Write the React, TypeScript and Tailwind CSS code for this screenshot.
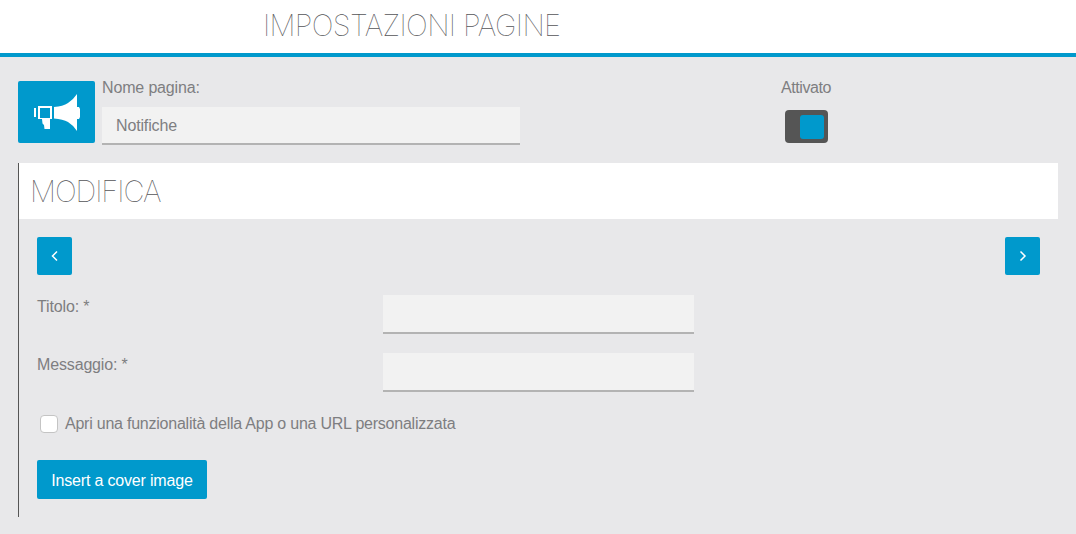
import React from 'react'

const Megaphone = () => (
  <svg width="46" height="37" viewBox="0 0 46 37" fill="white">
    <rect x="0" y="14" width="2" height="9" />
    <path fillRule="evenodd" d="M4 12h14v13h-2v10h-5.500l-.5-4-1.500-1.500-.5-4.500h-4zM6 14v10h10v-10z" />
    <path d="M20 13q9-.5 14-4q5-3 9-9v13h2l1 2v8l-1 2h-2v12q-4-6-9-9q-5-3-14-3.500z" />
  </svg>
)

const Chevron = ({ right }: { right?: boolean }) => (
  <svg width="8" height="12" viewBox="0 0 8 12" fill="none" stroke="white" strokeWidth="1.500">
    <path d={right ? 'M1.500 1.500L6 6L1.500 10.500' : 'M6 1.500L1.500 6L6 10.500'} />
  </svg>
)

const NavButton = ({ right }: { right?: boolean }) => (
  <button className="w-[35px] h-[38px] rounded-[2px] bg-[#0099cc] flex items-center justify-center">
    <Chevron right={right} />
  </button>
)

const Field = ({ label, mb }: { label: string; mb: string }) => (
  <div className={`flex ${mb}`}>
    <label className="w-[346px] pt-[2px] text-[16px] leading-[20px] tracking-[-0.150px] text-[#7e7e81]">{label}</label>
    <div className="w-[311px] h-[39px] bg-[#f2f2f2] border-b-2 border-[#b3b3b3]" />
  </div>
)

const App = () => {
  return (
    <div className="h-[534px] bg-[#e8e8ea] font-['Liberation_Sans',sans-serif] overflow-hidden">
      <div className="h-[57px] bg-white border-b-4 border-[#0099cc] pl-[263px] pt-[9px]">
        <h1 className="text-[29px] leading-[34px] font-thin font-['Inter',sans-serif] tracking-[-0.650px] text-[#555558]">
          IMPOSTAZIONI PAGINE
        </h1>
      </div>

      <div className="flex pl-[18px] pt-[24px] h-[106px]">
        <div className="mr-[7px] w-[77px] h-[62px] rounded-[2px] bg-[#0099cc] flex items-center justify-center">
          <Megaphone />
        </div>
        <div className="w-[418px]">
          <div className="h-[26px] text-[16px] leading-[14px] tracking-[-0.150px] text-[#7e7e81]">Nome pagina:</div>
          <div className="h-[38px] bg-[#f2f2f2] border-b-2 border-[#b3b3b3] pl-[14px] text-[16px] leading-[37px] tracking-[-0.150px] text-[#7e7e81]">
            Notifiche
          </div>
        </div>
        <div className="ml-[261px] flex flex-col items-center w-[50px]">
          <div className="h-[29px] text-[16px] leading-[14px] tracking-[-0.400px] text-[#7e7e81]">Attivato</div>
          <div className="w-[43px] h-[33px] rounded-[4px] bg-[#555555] flex justify-end items-center pr-[4px]">
            <div className="w-[24px] h-[24px] rounded-[3px] bg-[#0099cc]" />
          </div>
        </div>
      </div>

      <div className="ml-[18px] mr-[18px] h-[354px] border-l border-[#555555]">
        <div className="h-[56px] bg-white pl-[11px] pt-[12px]">
          <h2 className="text-[29px] leading-[34px] font-thin font-['Inter',sans-serif] tracking-[-1.050px] text-[#555558]">
            MODIFICA
          </h2>
        </div>
        <div className="pl-[18px] pr-[18px] pt-[18px]">
          <div className="flex justify-between mb-[20px]">
            <NavButton />
            <NavButton right />
          </div>
          <Field label="Titolo: *" mb="mb-[19px]" />
          <Field label="Messaggio: *" mb="mb-[23px]" />
          <label className="flex items-center h-[18px] pl-[3px] mb-[27px]">
            <span className="w-[18px] h-[18px] rounded-[4px] bg-white border border-[#c4c4c4] mr-[7px]" />
            <span className="text-[16px] leading-[18px] tracking-[-0.230px] text-[#7e7e81]">
              Apri una funzionalità della App o una URL personalizzata
            </span>
          </label>
          <button className="w-[170px] h-[39px] pt-[2px] rounded-[2px] bg-[#0099cc] text-white text-[16px] tracking-[-0.180px]">
            Insert a cover image
          </button>
        </div>
      </div>
    </div>
  )
}

export default App
